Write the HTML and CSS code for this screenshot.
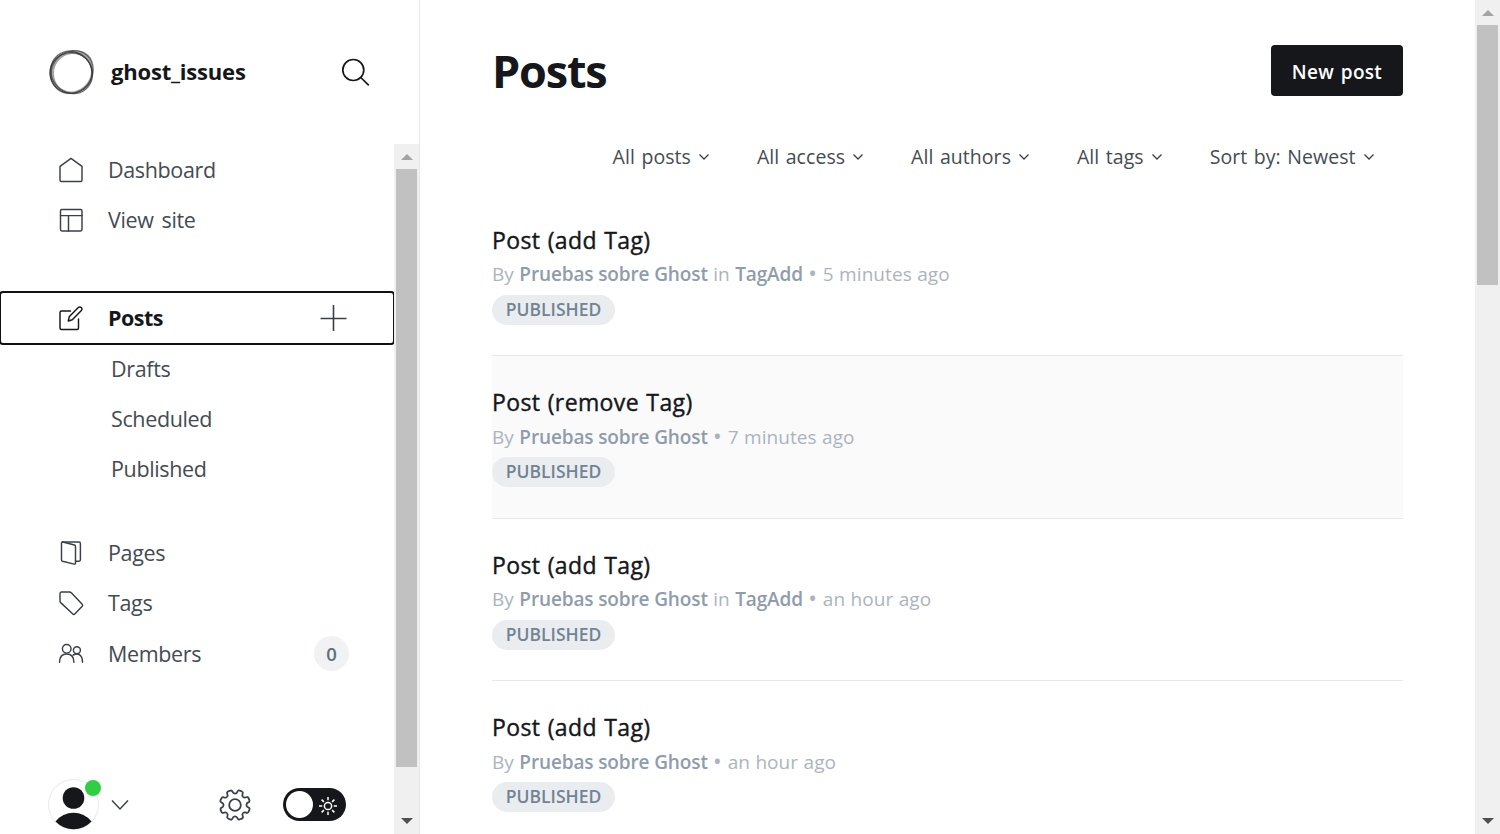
FILE: index.html
```html
<!DOCTYPE html>
<html lang="en">
<head>
<meta charset="utf-8">
<title>Posts - ghost_issues</title>
<link rel="stylesheet" href="styles.css">
</head>
<body>
<div class="app">
  <aside class="sidebar">
    <header class="site">
      <svg class="logo" width="48" height="48" viewBox="0 0 48 48" fill="none">
        <path fill-rule="evenodd" fill="#555" fill-opacity=".55" d="M1.500 24C1.500 13 10 5.500 19 4c9-4 23-1 25.500 10 3.500 15-3 31-21.500 31.500C10 45.500 1.500 36 1.500 24zM6 25.500c0 11 8 18 17.500 18S43 34 43 23.500 35 6 25 6 6 14.500 6 25.500z"/>
        <ellipse cx="23" cy="25" rx="21" ry="20.300" stroke="#333" stroke-opacity=".85" stroke-width="1.300"/>
        <ellipse cx="24" cy="24" rx="22.500" ry="20" stroke="#444" stroke-opacity=".7" stroke-width="1.200" transform="rotate(-48 24 24)"/>
        <ellipse cx="24" cy="24.500" rx="22" ry="20" stroke="#333" stroke-opacity=".7" stroke-width="1.200" transform="rotate(50 24 24)"/>
      </svg>
      <span class="site-name">ghost_issues</span>
      <svg class="search" width="30" height="30" viewBox="0 0 30 30" fill="none" stroke="#15171a" stroke-width="1.700"><circle cx="13.300" cy="13" r="10.500"/><path d="M20.800 20.500l8 7.800"/></svg>
    </header>
    <div class="side-body">
      <div class="side-main">
        <nav>
          <ul class="group">
            <li class="item"><svg class="ic" viewBox="0 0 26 26"><path d="M2 9.400 13 1.400l11 8v13.800a1.300 1.300 0 0 1-1.300 1.300H3.300A1.300 1.300 0 0 1 2 23.200z"/></svg><span>Dashboard</span></li>
            <li class="item"><svg class="ic" viewBox="0 0 26 26"><rect x="2.500" y="2.500" width="21.500" height="21.500" rx="1.400"/><path d="M2.500 8.600H24M10.500 8.600V24"/></svg><span>View site</span></li>
          </ul>
          <ul class="group posts-group">
            <li class="item current"><svg class="ic" viewBox="0 0 26 26"><path d="M12.500 6H3.500A1.500 1.500 0 0 0 2 7.500v15.500a1.500 1.500 0 0 0 1.500 1.500H19a1.500 1.500 0 0 0 1.500-1.500V14"/><path d="M20.300 2.600a2.150 2.150 0 0 1 3.100 3L14.300 14.800 10.300 16l.9-4.200z"/></svg><span>Posts</span><svg class="plus" width="28" height="28" viewBox="0 0 28 28"><path d="M13.500 1v26M.500 14.500h26"/></svg></li>
            <li class="item sub"><span>Drafts</span></li>
            <li class="item sub"><span>Scheduled</span></li>
            <li class="item sub"><span>Published</span></li>
          </ul>
          <ul class="group">
            <li class="item"><svg class="ic" viewBox="0 0 26 26"><path d="M3.500 3.200c0-.9.400-1.400 1.300-1.200l11.700 3c.7.200 1 .6 1 1.300V23.100c0 .8-.5 1.200-1.300 1L4.500 21.200c-.7-.2-1-.6-1-1.300z"/><path d="M4.500 2H21a1.400 1.400 0 0 1 1.400 1.400v16.400a1.400 1.400 0 0 1-1.400 1.400h-3.500"/></svg><span>Pages</span></li>
            <li class="item"><svg class="ic" viewBox="0 0 26 26"><path d="M3.400 2h8.200c.7 0 1.200.2 1.700.7L24.200 14.300a1.400 1.400 0 0 1 0 2L16.800 24a1.400 1.400 0 0 1-2 0L2.700 12.600c-.5-.5-.7-1-.7-1.700V3.400A1.400 1.400 0 0 1 3.400 2z"/></svg><span>Tags</span></li>
            <li class="item members"><svg class="ic" viewBox="0 0 26 26"><circle cx="8.700" cy="7.800" r="4.300"/><path d="M1.500 21.200c0-5.800 2.800-8.300 7.200-8.300s7.200 2.500 7.200 8.300M15.200 14c5.600-2.600 9.300.4 9.300 7.200"/><circle cx="18.900" cy="9.200" r="3.500"/></svg><span>Members</span><b class="count">0</b></li>
          </ul>
        </nav>
        <footer class="account">
          <div class="avatar">
            <svg width="51" height="51" viewBox="0 0 51 51"><circle cx="25.500" cy="25.500" r="25" fill="#fff" stroke="#e6e8ea"/><circle cx="25.500" cy="19" r="10.800" fill="#15171a"/><path d="M7.500 42.500a23 23 0 0 1 36 0 25 25 0 0 1-36 0z" fill="#15171a"/></svg>
            <i class="dot"></i>
          </div>
          <svg class="caret" width="18" height="12" viewBox="0 0 18 12"><path d="M1 1.500l8 8.500 8-8.500"/></svg>
          <svg class="gear" width="32" height="32" viewBox="0 0 32 32">
            <defs><path id="tooth" d="M16 4.600c1.600 0 2-.7 2.400-1.900.4-1.200 1.300-1.600 2.500-1.100l1.600.7c1.200.5 1.600 1.400 1.100 2.500-.5 1.200-.5 2.100.46 3.140"/></defs>
            <circle cx="16" cy="16" r="5.800"/>
            <use href="#tooth"/><use href="#tooth" transform="rotate(45 16 16)"/><use href="#tooth" transform="rotate(90 16 16)"/><use href="#tooth" transform="rotate(135 16 16)"/><use href="#tooth" transform="rotate(180 16 16)"/><use href="#tooth" transform="rotate(225 16 16)"/><use href="#tooth" transform="rotate(270 16 16)"/><use href="#tooth" transform="rotate(315 16 16)"/>
          </svg>
          <div class="toggle"><i class="knob"></i><svg width="18" height="18" viewBox="0 0 18 18" fill="none" stroke="#fff" stroke-width="1.500"><circle cx="9" cy="9" r="3.600"/><path d="M9 0v3.300M9 14.700V18M0 9h3.300M14.700 9H18M2.600 2.600l2.300 2.300M13.100 13.100l2.300 2.300M15.400 2.600l-2.300 2.300M4.900 13.100l-2.300 2.300"/></svg></div>
        </footer>
      </div>
      <div class="bar"><i class="up"></i><i class="thumb side-thumb"></i><i class="down"></i></div>
    </div>
  </aside>
  <main class="content">
    <header class="head"><h1>Posts</h1><a class="new">New post</a></header>
    <div class="filters">
      <span class="filter">All posts<svg class="chev" viewBox="0 0 12 8"><path d="M1.500 1.500L6 6l4.500-4.500"/></svg></span>
      <span class="filter">All access<svg class="chev" viewBox="0 0 12 8"><path d="M1.500 1.500L6 6l4.500-4.500"/></svg></span>
      <span class="filter">All authors<svg class="chev" viewBox="0 0 12 8"><path d="M1.500 1.500L6 6l4.500-4.500"/></svg></span>
      <span class="filter">All tags<svg class="chev" viewBox="0 0 12 8"><path d="M1.500 1.500L6 6l4.500-4.500"/></svg></span>
      <span class="filter">Sort by: Newest<svg class="chev" viewBox="0 0 12 8"><path d="M1.500 1.500L6 6l4.500-4.500"/></svg></span>
    </div>
    <ol class="posts">
      <li class="post"><h3>Post (add Tag)</h3><p>By <b>Pruebas sobre Ghost</b> in <b>TagAdd</b> <span class="sep">•</span> 5 minutes ago</p><span class="badge">PUBLISHED</span></li>
      <li class="post hover"><h3>Post (remove Tag)</h3><p>By <b>Pruebas sobre Ghost</b> <span class="sep">•</span> 7 minutes ago</p><span class="badge">PUBLISHED</span></li>
      <li class="post"><h3>Post (add Tag)</h3><p>By <b>Pruebas sobre Ghost</b> in <b>TagAdd</b> <span class="sep">•</span> an hour ago</p><span class="badge">PUBLISHED</span></li>
      <li class="post"><h3>Post (add Tag)</h3><p>By <b>Pruebas sobre Ghost</b> <span class="sep">•</span> an hour ago</p><span class="badge">PUBLISHED</span></li>
    </ol>
  </main>
  <div class="bar"><i class="up"></i><i class="thumb main-thumb"></i><i class="down"></i></div>
</div>
</body>
</html>
```
FILE: styles.css
```css
* { box-sizing: border-box; margin: 0; padding: 0; }
body { font-family: "Segoe UI", "Open Sans", "Noto Sans", sans-serif; color: #15171a; background: #fff; overflow: hidden; }
ul, ol { list-style: none; }
i { display: block; }
svg { flex: none; display: block; }
.app { display: flex; height: 834px; overflow: hidden; }

/* Sidebar */
.sidebar { width: 420px; flex: none; display: flex; flex-direction: column; border-right: 1px solid #e6e9eb; }
.site { height: 144px; flex: none; display: flex; align-items: center; padding: 0 49px 0 48px; }
.site-name { margin-left: 15px; flex: 1; padding-bottom: 2px; font-size: 22px; font-weight: 700; line-height: 30px; letter-spacing: -.2px; white-space: nowrap; }
.side-body { flex: 1; display: flex; min-height: 0; }
.side-main { flex: 1; display: flex; flex-direction: column; justify-content: space-between; }
nav { padding-top: 1px; }
.group + .group { margin-top: 48px; }
.posts-group + .group { margin-top: 34px; }
.item { display: flex; align-items: center; height: 50px; padding: 0 46px 0 58px; font-size: 21.5px; line-height: 30px; letter-spacing: -.36px; word-spacing: 2.8px; color: #444b53; }
.item span { flex: 1; margin-left: 24px; white-space: nowrap; }
.ic { width: 26px; height: 26px; fill: none; stroke: #394047; stroke-width: 1.45; stroke-linejoin: round; stroke-linecap: round; }
.current { color: #15171a; font-weight: 700; letter-spacing: -.5px; outline: 2.5px solid #101114; border-radius: 2px; margin: 0 1px 1px; padding: 0 45px 0 57px; }
.current .ic { stroke: #15171a; }
.plus { stroke: #394047; stroke-width: 1.6; }
.sub span { margin-left: 53px; }
.members { margin-top: 1px; padding-right: 45px; }
.count { width: 35px; height: 35px; margin-bottom: 1px; border-radius: 50%; background: #f1f2f4; color: #626d79; font-size: 18.5px; font-weight: 600; line-height: 35px; letter-spacing: 0; text-align: center; }
.account { display: flex; align-items: center; height: 51px; margin: 0 0 4px 48px; }
.avatar { position: relative; width: 51px; height: 51px; }
.dot { position: absolute; right: -2px; top: 1px; width: 16px; height: 16px; border-radius: 50%; background: #30cf43; }
.caret { margin-left: 12px; fill: none; stroke: #394047; stroke-width: 1.5; }
.gear { margin-left: 90px; margin-top: 1px; fill: none; stroke: #394047; stroke-width: 1.8; }
.toggle { display: flex; align-items: center; justify-content: space-between; width: 63px; height: 33px; margin-left: 32px; padding: 3px 9px 3px 3px; border-radius: 17px; background: #15171a; }
.toggle svg { margin-top: 3px; }
.knob { width: 27px; height: 27px; border-radius: 50%; background: #fff; }

/* Scroll bars */
.bar { width: 25px; flex: none; background: #f0f0f0; display: flex; flex-direction: column; align-items: center; }
.up { border: 6px solid transparent; border-top: 0; border-bottom: 6px solid #a3a3a3; margin: 10px 0 9px; }
.thumb { width: 21px; background: #c1c1c1; }
.side-thumb { height: 598px; }
.main-thumb { height: 260px; }
.down { border: 6px solid transparent; border-bottom: 0; border-top: 6px solid #505050; margin: auto 0 10px; }

/* Content */
.content { flex: 1; padding: 45px 72px 0; }
.head { display: flex; align-items: center; justify-content: space-between; height: 51px; }
h1 { font-size: 45px; line-height: 60px; font-weight: 700; letter-spacing: -1.2px; }
.new { width: 132px; height: 51px; border-radius: 4px; background: #15171a; color: #fff; font-size: 19px; font-weight: 600; line-height: 54px; letter-spacing: .3px; word-spacing: 1.5px; text-align: center; white-space: nowrap; }
.filters { display: flex; justify-content: flex-end; gap: 47px; height: 97.6px; padding: 45px 28.5px 0 0; }
.filter { display: flex; align-items: center; height: 30px; font-size: 19.5px; letter-spacing: .05px; word-spacing: 1.4px; color: #444b53; white-space: nowrap; }
.chev { width: 12px; height: 8px; margin: 1px 0 0 7px; fill: none; stroke: #394047; stroke-width: 1.3; }
.post { height: 162.5px; padding-top: 30.4px; border-bottom: 1px solid #e6e9eb; }
.hover { background: #fafafa; }
h3 { font-size: 23px; font-weight: 500; line-height: 32px; letter-spacing: .38px; word-spacing: 1px; -webkit-text-stroke: .4px #15171a; white-space: nowrap; }
.post p { margin-top: 1.4px; font-size: 19px; line-height: 34px; letter-spacing: .07px; word-spacing: .4px; color: #abb4be; white-space: nowrap; }
.post b { font-weight: 600; letter-spacing: -.13px; word-spacing: 0; color: #8e9cac; }
.sep { font-size: 23px; line-height: 0; vertical-align: -1px; margin: 0 .5px 0 -.2px; }
.badge { display: block; width: 123px; height: 30px; margin-top: 3.4px; border-radius: 15px; background: #e9edf0; color: #738393; font-size: 17.5px; font-weight: 600; line-height: 29px; text-align: center; }
```
